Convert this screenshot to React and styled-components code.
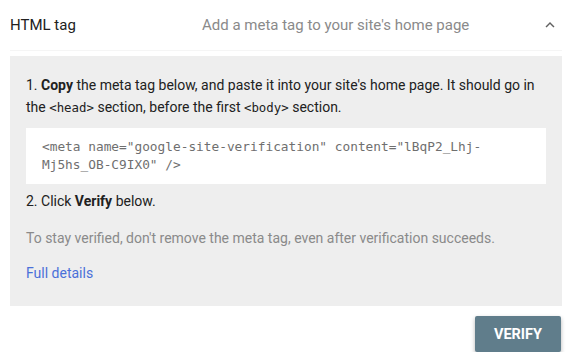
import styled, { createGlobalStyle } from "styled-components";

const GlobalStyle = createGlobalStyle`
  body {
    margin: 0;
    background: #fff;
    font-family: Roboto, "Noto Sans", sans-serif;
  }
`;

const Container = styled.div`
  width: 572px;
  padding: 0 10px;
  box-sizing: border-box;
`;

const Header = styled.div`
  height: 50px;
  display: flex;
  align-items: center;
  border-bottom: 1px solid #f5f5f5;
  margin-bottom: 5px;
`;

const Title = styled.div`
  width: 192px;
  font-size: 15px;
  color: #212121;
`;

const Subtitle = styled.div`
  flex: 1;
  font-size: 15px;
  color: #8a8a8a;
`;

const Chevron = styled.svg`
  width: 18px;
  height: 18px;
  margin-right: 3px;
`;

const Panel = styled.div`
  background: #eeeeee;
  padding: 18px 16px 22px;
  font-size: 14px;
  line-height: 22px;
  color: #212121;
`;

const Para = styled.p`
  margin: ${(p) => p.$top || 0}px 0 0;
  color: ${(p) => (p.$muted ? "#8a8a8a" : "#212121")};
`;

const Tag = styled.code`
  font-family: "DejaVu Sans Mono", monospace;
  font-size: 12.4px;
`;

const CodeBox = styled.div`
  margin-top: 9px;
  background: #fff;
  padding: 10px 16px;
  font-family: "DejaVu Sans Mono", monospace;
  font-size: 12.8px;
  line-height: 18px;
  color: #6f6f6f;
`;

const Link = styled.a`
  display: block;
  margin-top: 13px;
  color: #4a70d9;
  text-decoration: none;
`;

const Footer = styled.div`
  display: flex;
  justify-content: flex-end;
  padding: 10px 1px 0 0;
`;

const Button = styled.button`
  width: 86px;
  height: 36px;
  border: none;
  border-radius: 2px;
  background: #607d8b;
  color: #fff;
  font-family: Roboto, sans-serif;
  font-weight: 700;
  font-size: 14.5px;
  box-shadow: 0 2px 4px rgba(0, 0, 0, 0.3);
`;

const App = () => {
  return (
    <Container>
      <GlobalStyle />
      <Header>
        <Title>HTML tag</Title>
        <Subtitle>Add a meta tag to your site's home page</Subtitle>
        <Chevron viewBox="0 0 24 24">
          <path d="M7.4 15.4 12 10.8l4.6 4.6L18 14l-6-6-6 6z" fill="#616161" />
        </Chevron>
      </Header>
      <Panel>
        <Para>
          1. <b>Copy</b> the meta tag below, and paste it into your site's home
          page. It should go in the <Tag>&lt;head&gt;</Tag> section, before the
          first <Tag>&lt;body&gt;</Tag> section.
        </Para>
        <CodeBox>
          &lt;meta name="google-site-verification" content="lBqP2_Lhj-Mj5hs_OB-C9IX0" /&gt;
        </CodeBox>
        <Para $top={6}>
          2. Click <b>Verify</b> below.
        </Para>
        <Para $top={15} $muted>
          To stay verified, don't remove the meta tag, even after verification
          succeeds.
        </Para>
        <Link href="#">Full details</Link>
      </Panel>
      <Footer>
        <Button>VERIFY</Button>
      </Footer>
    </Container>
  );
};

export default App;
